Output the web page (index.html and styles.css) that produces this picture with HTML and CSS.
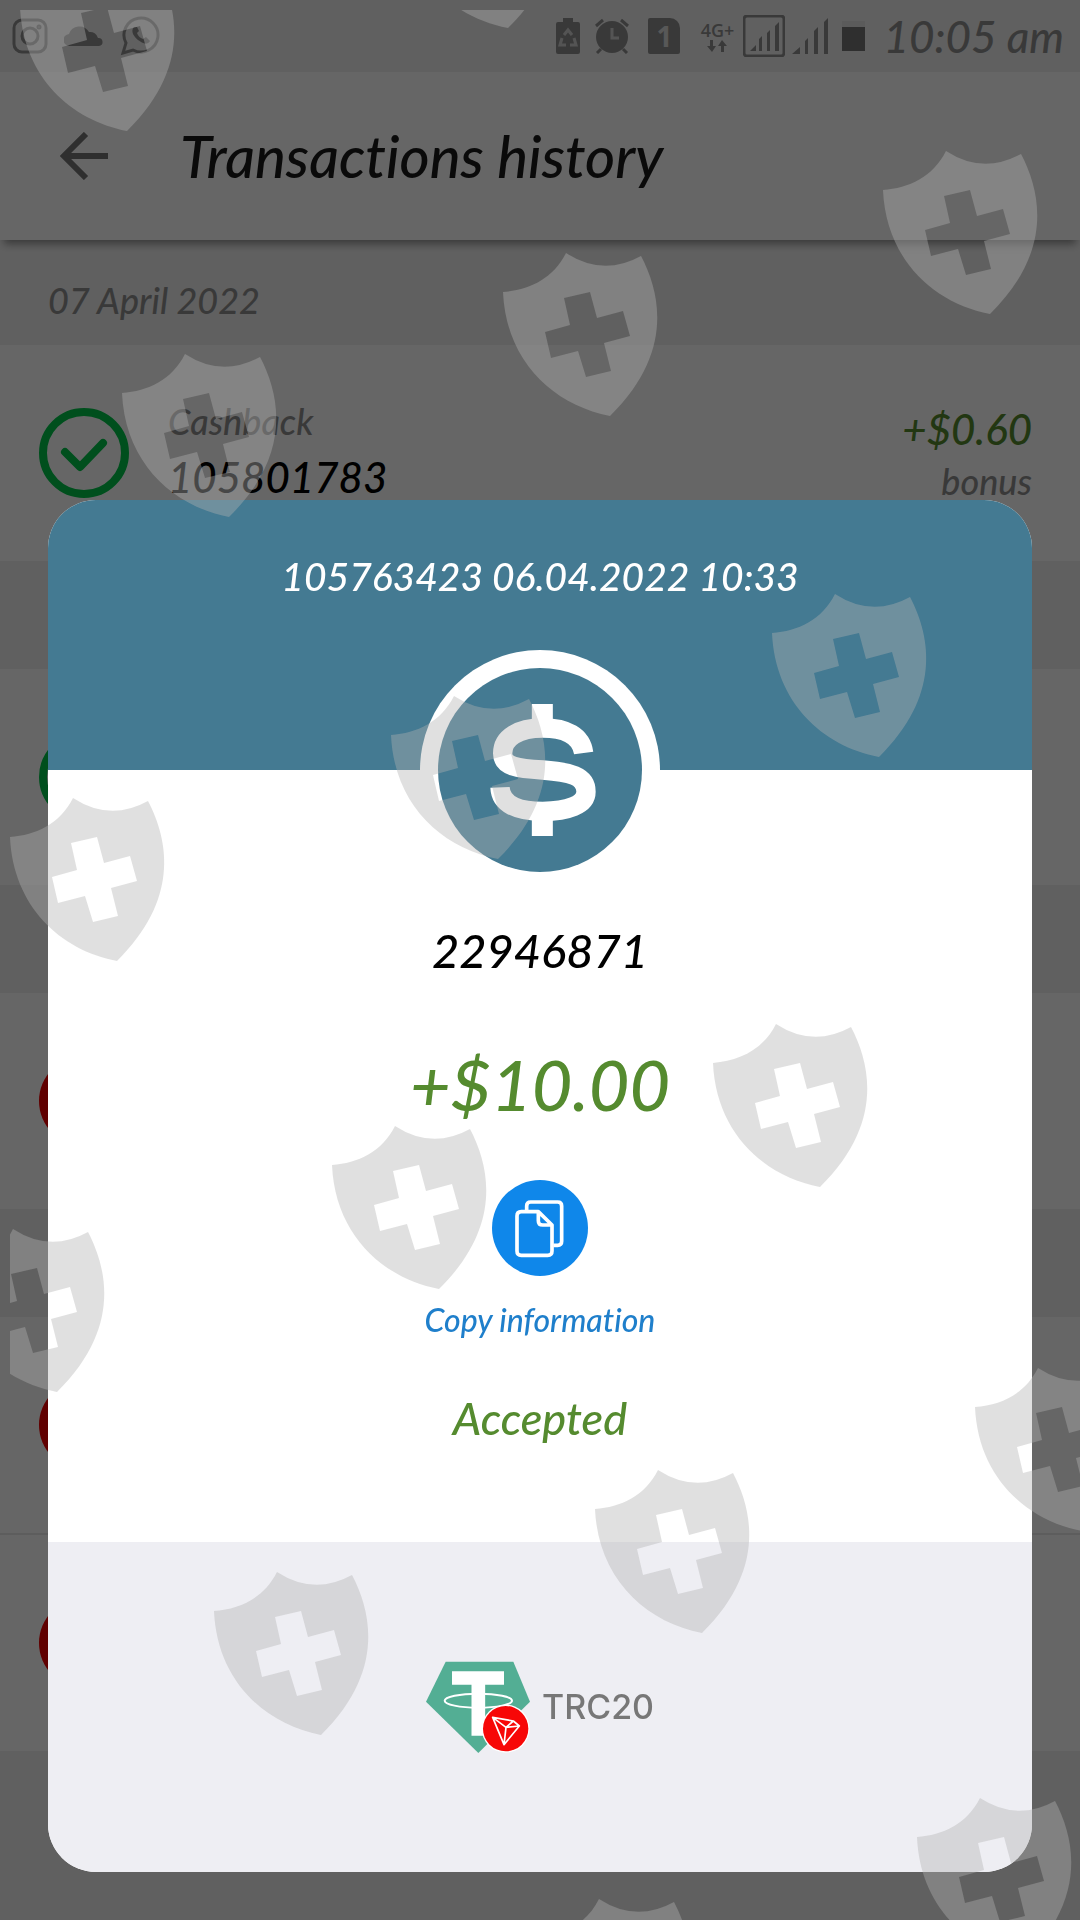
FILE: index.html
```html
<!DOCTYPE html>
<html lang="en">
<head>
  <meta charset="UTF-8" />
  <meta name="viewport" content="width=device-width, initial-scale=1.0" />
  <title>Transactions history</title>
  <link rel="stylesheet" href="styles.css">
</head>
<body>
  <div class="status-bar">
    <div class="status-left">
      <svg width="36" height="36" viewBox="0 0 36 36" fill="none" stroke="currentColor" stroke-width="3">
        <rect x="2" y="2" width="32" height="32" rx="8" />
        <circle cx="18" cy="18" r="8" />
        <circle cx="27" cy="9" r="1" />
      </svg>
      <svg width="40" height="24" viewBox="0 0 40 24" fill="currentColor">
        <path d="M6 22a6 6 0 0 1-1-12A11 11 0 0 1 25 8a8 8 0 0 1 9 6 4 4 0 0 1 1 8z" />
      </svg>
      <svg width="40" height="40" viewBox="0 0 40 40" fill="none" stroke="currentColor" stroke-width="3">
        <path d="M3 37l3-10a17 17 0 1 1 7 7z" />
        <path d="M14 11c-4 4 0 10 4 13s9 6 12 1l-4-4-3 2c-3-1-5-3-6-6l2-2-2-4z" fill="currentColor" stroke="none" />
      </svg>
    </div>
    <div class="status-right">
      <svg width="24" height="36" viewBox="0 0 24 36">
        <path d="M7 0h10v4h5q2 0 2 2v28q0 2-2 2H2q-2 0-2-2V6q0-2 2-2h5z" fill="currentColor" />
        <path d="M8 17l4-5 4 5M6 20l-2 7h6M18 20l2 7h-6" fill="none" stroke="#f0f0f0" stroke-opacity=".7" stroke-width="3" />
      </svg>
      <svg width="36" height="36" viewBox="0 0 36 36" fill="none" stroke="currentColor" stroke-width="3">
        <circle cx="18" cy="19" r="16" fill="currentColor" stroke="none" />
        <path d="M2 8l7-6M34 8l-7-6M7 31l-4 4M29 31l4 4" />
        <path d="M18 10v10h7" stroke="#f0f0f0" stroke-opacity=".7" />
      </svg>
      <span class="sim">1</span>
      <div class="radio">
        <div class="network">
          <span>4G+</span>
          <svg width="20" height="12" viewBox="0 0 20 12" fill="currentColor">
            <path d="M3 0h3v6h3l-4 6-5-6h3zM14 12h3V6h3l-5-6-4 6h3z" />
          </svg>
        </div>
        <svg width="42" height="42" viewBox="0 0 42 42" fill="currentColor">
          <rect x="1" y="1" width="40" height="40" rx="3" fill="none" stroke="currentColor" stroke-width="3" />
          <path d="M7 36l6-6v6zM16 24l3-3v15h-3zM24 18l3-3v21h-3zM32 11l4-4v29h-4z" />
        </svg>
        <svg width="36" height="36" viewBox="0 0 36 36" fill="currentColor">
          <path d="M0 36l8-7v7zM13 23l3-3v16h-3zM22 13l4-4v27h-4zM32 4l4-4v36h-4z" />
        </svg>
      </div>
      <span class="battery"></span>
      <time>10:05 am</time>
    </div>
  </div>

  <header>
    <a href="#" class="back" aria-label="Back">
      <svg width="48" height="48" viewBox="0 0 48 48" fill="none" stroke="currentColor" stroke-width="6">
        <path d="M26 2L4 24l22 22M4 24h44" />
      </svg>
    </a>
    <h1>Transactions history</h1>
  </header>

  <main>
    <h2 class="date">07 April 2022</h2>
    <div class="row">
      <svg class="ok" width="90" height="90" viewBox="0 0 90 90">
        <circle cx="45" cy="45" r="41" />
        <path d="M26 44l15 15 23-24" />
      </svg>
      <div class="row-main">
        <p>Cashback</p>
        <p class="number">105801783</p>
      </div>
      <div class="row-sum">
        <p class="sum">+$0.60</p>
        <p>bonus</p>
      </div>
    </div>
    <div class="date"></div>
    <div class="row">
      <svg class="ok" width="90" height="90" viewBox="0 0 90 90">
        <circle cx="45" cy="45" r="41" />
        <path d="M26 44l15 15 23-24" />
      </svg>
    </div>
    <div class="date"></div>
    <div class="row"><span class="fail"></span></div>
    <div class="date"></div>
    <div class="row"><span class="fail"></span></div>
    <div class="row"><span class="fail"></span></div>
  </main>

  <div class="backdrop">
    <section class="dialog" role="dialog" aria-label="Transaction">
      <div class="dialog-head">105763423 06.04.2022 10:33</div>
      <div class="dialog-body">
        <svg class="coin" viewBox="180 90 720 720">
          <circle cx="540" cy="450" r="360" fill="#fff" />
          <circle cx="540" cy="450" r="306" fill="#447a92" />
          <path d="M547 252v70M547 575v73" stroke-width="63" />
          <path d="M671 399C664 348 620 324 548 324C476 324 428 352 428 400C428 440 474 446 548 450C630 456 678 468 678 515C678 555 622 574 548 574C472 574 422 552 420 502" stroke-width="58" />
        </svg>
        <p class="account">22946871</p>
        <p class="amount">+$10.00</p>
        <button type="button" class="copy">
          <svg width="96" height="96" viewBox="336 480 288 288">
            <circle cx="480" cy="624" r="144" fill="#0f87ea" />
            <g fill="none" stroke="#fff" stroke-width="11" stroke-linejoin="round">
              <path d="M440 570V558q0-12 12-12H533q12 0 12 12V664q0 12-12 12H520" />
              <path d="M475 575H424q-13 0-13 13V693q0 13 13 13H503q13 0 13-13V615zV602q0 13 13 13H516" />
            </g>
          </svg>
          <span>Copy information</span>
        </button>
        <p class="state">Accepted</p>
      </div>
      <div class="dialog-foot">
        <svg width="104" height="93" viewBox="78 91 312 279">
          <path d="M137 93H340L390 213L235 367L78 213z" fill="#53ae94" />
          <ellipse cx="235" cy="210" rx="101" ry="21" fill="none" stroke="#fff" stroke-width="6" />
          <path d="M156 142H312M235 142V315" stroke="#fff" stroke-width="41" />
          <circle cx="317" cy="294" r="72" fill="#fff" />
          <circle cx="317" cy="294" r="68" fill="#f70707" />
          <path d="M278 260L340 271L358 286L312 342zL318 290L312 342M318 290L358 286M318 290L340 271" fill="none" stroke="#fff" stroke-width="5" stroke-linejoin="round" />
        </svg>
        <span>TRC20</span>
      </div>
    </section>
  </div>

  <svg class="shields" aria-hidden="true">
    <defs>
      <path id="shield" fill-rule="evenodd" d="M0 39C26 37 50 26 63 0Q100 24 138 3C160 45 168 103 107 163C50 152 3 108 0 39zM61 45L87 39L94 65L120 58L127 83L101 90L108 118L83 124L75 98L48 105L42 79L67 72z" />
    </defs>
    <use href="#shield" x="10" y="-42" />
    <use href="#shield" x="391" y="-145" />
    <use href="#shield" x="873" y="141" />
    <use href="#shield" x="493" y="243" />
    <use href="#shield" x="112" y="344" />
    <use href="#shield" x="762" y="584" />
    <use href="#shield" x="381" y="686" />
    <use href="#shield" x="0" y="788" />
    <use href="#shield" x="703" y="1014" />
    <use href="#shield" x="322" y="1116" />
    <use href="#shield" x="-60" y="1219" />
    <use href="#shield" x="965" y="1358" />
    <use href="#shield" x="585" y="1460" />
    <use href="#shield" x="204" y="1562" />
    <use href="#shield" x="907" y="1788" />
    <use href="#shield" x="526" y="1889" />
  </svg>
</body>
</html>
```

FILE: styles.css
```css
* {
  box-sizing: border-box;
}

body {
  margin: 0;
  min-height: 100vh;
  background: #f0f0f0;
  font-family: Lato, "Open Sans", sans-serif;
  font-style: italic;
  font-weight: 500;
  font-variant-ligatures: none;
  color: #909090;
}

h1, h2, p {
  margin: 0;
  font-weight: 500;
}

.status-bar {
  display: flex;
  justify-content: space-between;
  align-items: center;
  height: 72px;
  padding: 0 16px 0 12px;
}

.status-left,
.status-right,
.radio {
  display: flex;
  align-items: center;
}

.status-left {
  gap: 16px;
}

.status-right {
  gap: 14px;
}

.radio {
  gap: 7px;
}

.sim {
  width: 32px;
  margin: 0 4px;
  border-radius: 2px 10px 2px 2px;
  background: #909090;
  color: #dcdcdc;
  font: bold 28px/36px "Open Sans", sans-serif;
  text-align: center;
}

.network {
  display: flex;
  flex-direction: column;
  align-items: center;
  width: 38px;
  font: 600 18px/20px "Open Sans", sans-serif;
}

.battery {
  width: 23px;
  height: 30px;
  border-top: 6px solid #e4e4e4;
  background: #757575;
}

.status-bar time {
  margin-left: 4px;
  font-size: 44px;
  line-height: 52px;
}

header {
  position: relative;
  display: flex;
  align-items: center;
  gap: 72px;
  height: 168px;
  padding: 0 60px;
  background: #fff;
  box-shadow: 0 8px 8px -4px rgba(0, 0, 0, 0.4);
}

.back {
  display: flex;
  color: #757575;
}

header h1 {
  color: #1a1a1a;
  font-size: 58px;
  line-height: 64px;
}

.date {
  height: 108px;
  padding-left: 48px;
  font-size: 36px;
  line-height: 120px;
}

.date:first-child {
  height: 105px;
}

.row {
  display: flex;
  align-items: center;
  gap: 39px;
  height: 216px;
  padding: 0 48px 0 39px;
  background: #fff;
  font-size: 36px;
  line-height: 56px;
}

.row + .row {
  height: 218px;
  border-top: 2px solid #e8e8e8;
}

.ok {
  fill: none;
  stroke: #00c64a;
  stroke-width: 8;
  stroke-linecap: round;
  stroke-linejoin: round;
}

.fail {
  width: 90px;
  height: 90px;
  border-radius: 50%;
  background: #f00000;
}

.row-main {
  flex: 1;
  padding-bottom: 8px;
}

.row-sum {
  padding-top: 4px;
  line-height: 52px;
  text-align: right;
}

.number {
  color: #000;
  font-size: 42px;
}

.sum {
  color: #558b2f;
  font-size: 42px;
}

.backdrop {
  position: fixed;
  inset: 0;
  display: flex;
  align-items: flex-end;
  padding: 48px;
  background: rgba(0, 0, 0, 0.6);
}

.dialog {
  width: 100%;
  border-radius: 48px;
  overflow: hidden;
  background: #fff;
  text-align: center;
}

.dialog-head {
  height: 270px;
  padding-top: 50px;
  background: #447a92;
  color: #fff;
  font-size: 39px;
  line-height: 52px;
}

.dialog-body {
  display: flex;
  flex-direction: column;
  align-items: center;
  padding-bottom: 98px;
}

.coin {
  width: 240px;
  height: 240px;
  margin-top: -120px;
  fill: none;
  stroke: #fff;
}

.coin circle {
  stroke: none;
}

.account {
  margin-top: 32px;
  color: #000;
  font-size: 47px;
  line-height: 56px;
}

.amount {
  margin-top: 64px;
  color: #558b2f;
  font-size: 70px;
  line-height: 84px;
}

.copy {
  display: flex;
  flex-direction: column;
  align-items: center;
  gap: 24px;
  margin-top: 54px;
  padding: 0;
  border: none;
  background: none;
  color: #1f7fcb;
  font: inherit;
  font-size: 32px;
  line-height: 40px;
  cursor: pointer;
}

.state {
  margin-top: 52px;
  color: #558b2f;
  font-size: 45px;
  line-height: 52px;
}

.dialog-foot {
  display: flex;
  justify-content: center;
  align-items: center;
  gap: 12px;
  height: 330px;
  background: #eeeef3;
  color: #777;
  font: 500 34px/40px Inter, sans-serif;
}

/* watermark over everything */
.shields {
  position: fixed;
  top: 10px;
  left: 10px;
  width: calc(100% - 10px);
  height: calc(100% - 10px);
  fill: rgba(177, 177, 177, 0.4);
  pointer-events: none;
}
```
